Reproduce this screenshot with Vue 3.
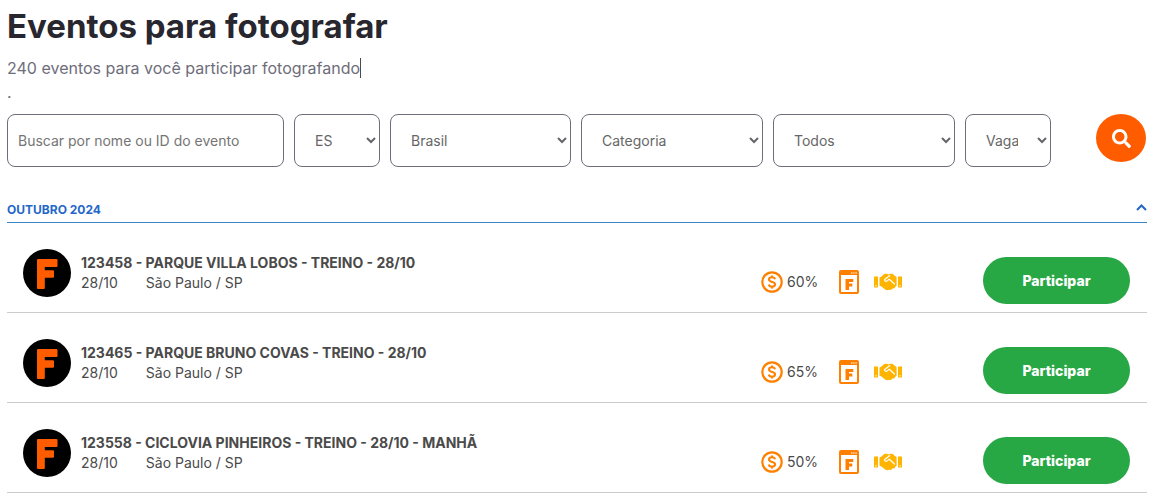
<script setup>
import { ref } from 'vue'

const search = ref('')
const filters = [
  { id: 'uf', label: 'Estado', options: ['ES'] },
  { id: 'pais', label: 'País', options: ['Brasil'] },
  { id: 'categoria', label: 'Categoria', options: ['Categoria'] },
  { id: 'tipo', label: 'Tipo', options: ['Todos'] },
  { id: 'vagas', label: 'Vagas', options: ['Vagas'] },
]
const open = ref(true)
const events = [
  { id: 123458, name: 'PARQUE VILLA LOBOS - TREINO - 28/10', date: '28/10', place: 'São Paulo / SP', share: '60%' },
  { id: 123465, name: 'PARQUE BRUNO COVAS - TREINO - 28/10', date: '28/10', place: 'São Paulo / SP', share: '65%' },
  { id: 123558, name: 'CICLOVIA PINHEIROS - TREINO - 28/10 - MANHÃ', date: '28/10', place: 'São Paulo / SP', share: '50%' },
]
</script>

<template>
  <main class="page">
    <h1>Eventos para fotografar</h1>
    <p class="subtitle"><span class="typed">240 eventos para você participar fotografando</span></p>
    <p class="dot">.</p>

    <form class="filters" @submit.prevent>
      <input v-model="search" class="field" type="text" aria-label="Buscar evento" placeholder="Buscar por nome ou ID do evento">
      <select v-for="f in filters" :key="f.id" class="field select" :aria-label="f.label">
        <option v-for="o in f.options" :key="o">{{ o }}</option>
      </select>
      <button class="search" type="submit" aria-label="Buscar">
        <svg width="19" height="19" viewBox="0 0 512 512" fill="currentColor"><path d="M505 442.7L405.3 343c-4.5-4.5-10.6-7-17-7H372c27.6-35.3 44-79.7 44-128C416 93.1 322.9 0 208 0S0 93.1 0 208s93.1 208 208 208c48.3 0 92.7-16.4 128-44v16.3c0 6.4 2.5 12.5 7 17l99.7 99.7c9.4 9.4 24.6 9.4 33.9 0l28.3-28.3c9.4-9.4 9.4-24.6.1-34zM208 336c-70.7 0-128-57.2-128-128 0-70.7 57.2-128 128-128 70.7 0 128 57.2 128 128 0 70.7-57.2 128-128 128z" /></svg>
      </button>
    </form>

    <section>
      <button class="month" type="button" :aria-expanded="open" @click="open = !open">
        <span>OUTUBRO 2024</span>
        <svg width="11" height="11" viewBox="0 0 11 11" fill="none" stroke="currentColor" stroke-width="2"><path d="M1 6 5.500 1.500 10 6" /></svg>
      </button>

      <ul v-if="open" class="list">
        <li v-for="e in events" :key="e.id" class="event">
          <svg class="avatar" width="48" height="48" viewBox="0 0 48 48">
            <circle cx="24" cy="24" r="24" fill="#000" />
            <path d="M15 10H33.500Q34.500 10 34.500 11V17Q34.500 18 33.500 18H21.800V21.200H30Q31 21.200 31 22.200V27.800Q31 28.800 30 28.800H21.800V39Q21.800 40 20.800 40H15Q14 40 14 39V11Q14 10 15 10Z" fill="#ff5c00" />
          </svg>
          <div class="info">
            <h2>{{ e.id }} - {{ e.name }}</h2>
            <p><span>{{ e.date }}</span><span>{{ e.place }}</span></p>
          </div>
          <div class="stats">
            <svg width="22" height="22" viewBox="0 0 22 22" fill="none" stroke="#ff8000">
              <circle cx="11" cy="11" r="9.700" stroke-width="2.200" />
              <path d="M14 8.300C13.700 7 12.600 6.300 11 6.300 9.300 6.300 8 7.200 8 8.600 8 10.200 9.500 10.600 11 10.900 12.600 11.200 14.100 11.700 14.100 13.300 14.100 14.800 12.800 15.700 11 15.700 9.300 15.700 8 14.900 7.800 13.500M11 4.500V6.300M11 15.700V17.500" stroke-width="2" />
            </svg>
            <span class="share">{{ e.share }}</span>
            <svg class="site" width="20" height="24" viewBox="0 0 20 24">
              <rect x="1" y="1" width="18" height="22" rx="1" fill="none" stroke="#ff8000" stroke-width="2" />
              <path d="M1 1H19V5H1Z" fill="#ff8000" />
              <path d="M12 3H13.500M14.200 3H15.700M16.400 3H17.900" stroke="#fff" stroke-width="1" />
              <path d="M6.500 9H14.300V12H10V13.500H13.300V16.500H10V20H6.500Z" fill="#ff8000" />
            </svg>
            <svg class="deal" width="28" height="18" viewBox="0 0 28 18">
              <path fill="#ffb400" d="M0 3.500H4V14.500H0ZM24 3.500H28V14.500H24Z" />
              <path fill="#ffb400" d="M5.500 4.500 7.500 3.500 10.500 .800H13L14.500 1.500 16 .800H18.500L21 3 22.600 4V12.800L21.500 13.500 20.500 15.200 18.500 15.600 17 17 15 16.800 13.500 17.300 11.500 16.800 7.500 13.500 5.500 12.800Z" />
              <path fill="none" stroke="#fff" stroke-width="1.200" stroke-linecap="round" stroke-linejoin="round" d="M15.800 2.600 10.700 6.500C10.100 7.800 11.600 8.700 12.800 8.100L15.300 6.300 20.500 11" />
              <path fill="#fff" d="M1.500 12H2.500V13.500H1.500ZM25.500 12H26.500V13.500H25.500Z" />
            </svg>
          </div>
          <button class="join" type="button">Participar</button>
        </li>
      </ul>
    </section>
  </main>
</template>

<style>
body {
  background: #fff;
}
</style>

<style scoped>
.page {
  padding: 0 14px 0 7px;
  font-family: Inter, "Liberation Sans", sans-serif;
  color: #4a4a4a;
}
h1,
h2,
p {
  margin: 0;
}
h1 {
  padding-top: 6px;
  font-size: 33px;
  line-height: 40px;
  font-weight: 700;
  color: #28262e;
}
.subtitle,
.dot {
  color: #6e6d7a;
  font-size: 16px;
}
.subtitle {
  display: flex;
  margin-top: 12px;
  line-height: 20px;
}
.typed {
  border-right: 1px solid #4a4a55;
}
.dot {
  margin-top: 2px;
  line-height: 24px;
}
.filters {
  display: grid;
  grid-template-columns: 277fr 86fr 181fr 182fr 182fr 86fr 86fr;
  gap: 10px;
  margin-top: 10px;
}
.field {
  box-sizing: border-box;
  width: 100%;
  min-width: 0;
  height: 53px;
  padding: 0 10px;
  border: 1px solid #6e6d7a;
  border-radius: 8px;
  background: #fff;
  color: #666;
  font: 400 14px/20px Inter, "Liberation Sans", sans-serif;
}
.field::placeholder {
  color: #757575;
}
.select {
  padding: 0 16px;
}
.search {
  display: flex;
  align-items: center;
  justify-content: center;
  justify-self: end;
  width: 50px;
  height: 48px;
  margin-right: 1px;
  padding: 0;
  border: 0;
  border-radius: 50%;
  background: #ff5c00;
  color: #fff;
}
.month {
  display: flex;
  align-items: center;
  justify-content: space-between;
  width: 100%;
  margin-top: 30px;
  padding: 0;
  border: 0;
  border-bottom: 1px solid #3d85c6;
  background: none;
  color: #2467c9;
  font: 700 12px/25px Inter, "Liberation Sans", sans-serif;
}
.list {
  margin: 0;
  padding: 0;
  list-style: none;
}
.event {
  display: flex;
  align-items: flex-start;
  padding: 26px 17px 15px 16px;
  border-bottom: 1px solid #ccc;
}
.info {
  flex: 1;
  margin-left: 10px;
  padding-top: 4px;
  font-size: 14px;
  line-height: 20px;
}
.info h2 {
  font-size: 14px;
  font-weight: 700;
}
.info p {
  display: flex;
  gap: 28px;
}
.stats {
  display: flex;
  align-items: center;
  width: 222px;
  padding-top: 21px;
  font-size: 14px;
  line-height: 24px;
}
.share {
  margin-left: 4px;
}
.site {
  margin-left: 21px;
}
.deal {
  margin-left: 15px;
}
.join {
  width: 147px;
  height: 47px;
  margin: 8px 0 -7px;
  padding: 0;
  border: 0;
  border-radius: 24px;
  background: #28a745;
  color: #fff;
  font: 800 14px/20px Inter, "Liberation Sans", sans-serif;
}
</style>
